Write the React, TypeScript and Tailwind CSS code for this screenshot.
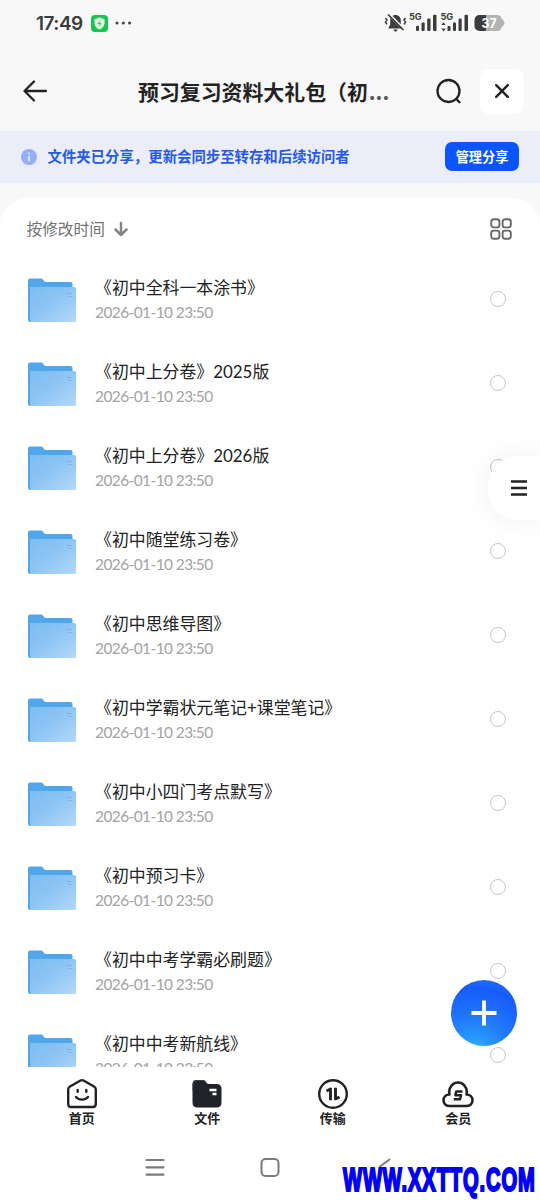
import React from 'react'

const folders = [
  '《初中全科一本涂书》',
  '《初中上分卷》2025版',
  '《初中上分卷》2026版',
  '《初中随堂练习卷》',
  '《初中思维导图》',
  '《初中学霸状元笔记+课堂笔记》',
  '《初中小四门考点默写》',
  '《初中预习卡》',
  '《初中中考学霸必刷题》',
  '《初中中考新航线》',
]

function StatusBar() {
  return (
    <div className="flex h-[46px] items-center pl-9 pr-[34px] text-[#3c3c3c]">
      <span className="mt-0.5 w-[47px] whitespace-nowrap font-[Inter,sans-serif] text-[19px] font-semibold leading-6 tracking-[-0.5px]">17:49</span>
      <svg className="ml-2" width="17" height="17" viewBox="0 0 17 17">
        <rect width="17" height="17" rx="4" fill="#16c653" />
        <path d="M8.5 2.5l5 1.8v4c0 3-2.2 5-5 6.3-2.8-1.3-5-3.3-5-6.3v-4z" fill="#e9fbe6" />
        <path d="M9.6 5L6 9h2.3l-.8 3L11 8H8.8z" fill="#3bcf68" />
      </svg>
      <svg className="ml-[7px]" width="17" height="4" viewBox="0 0 17 4" fill="#4a4a4a">
        <circle cx="2" cy="2" r="1.6" />
        <circle cx="8.3" cy="2" r="1.6" />
        <circle cx="14.6" cy="2" r="1.6" />
      </svg>
      <svg className="ml-auto" width="122" height="24" viewBox="0 0 122 24" fill="#3c3c3c">
        {/* muted bell */}
        <path d="M11.5 4c-3.300 0-5.300 2.400-5.300 5.500v4L4.500 16.700V17.500h14v-.8L16.800 13.500v-4c0-3.100-2-5.500-5.300-5.500z" />
        <path d="M9.500 18.500h4c-.3 1.500-1 2-2 2s-1.700-.5-2-2z" />
        <path d="M4 2.500l16 16" stroke="#f8f8f8" strokeWidth="3" />
        <path d="M4 3.500l15.500 15.500" stroke="#3c3c3c" strokeWidth="1.700" />
        <path d="M1.500 7l1.500 2-1.500 2.200 1.500 2.200M21.500 7L20 9l1.500 2.200-1.500 2.200" fill="none" stroke="#3c3c3c" strokeWidth="1.500" />
        {/* first sim */}
        <text x="25" y="8.800" fontSize="9.200" fontWeight="700" fontFamily="Inter, sans-serif">5G</text>
        <rect x="32" y="14.800" width="3" height="5.200" rx="1" />
        <rect x="37.500" y="11.500" width="3.200" height="8.500" rx="1" />
        <rect x="43.200" y="7.500" width="3.300" height="12.500" rx="1" />
        <rect x="49" y="3.800" width="3.500" height="16.200" rx="1" />
        {/* second sim */}
        <text x="56.500" y="8.800" fontSize="9.200" fontWeight="700" fontFamily="Inter, sans-serif">5G</text>
        <path d="M57.300 14l2.200-2.800 2.200 2.800zM57.300 17.600l2.200 2.800 2.200-2.800z" />
        <rect x="63.500" y="15" width="3" height="5" rx="1" />
        <rect x="69" y="11.500" width="3" height="8.500" rx="1" />
        <rect x="74.500" y="7.500" width="3.200" height="12.500" rx="1" />
        <rect x="80.500" y="3.800" width="3.500" height="16.200" rx="1" />
        {/* battery */}
        <path d="M95 4h18c3 0 4 1.500 4.500 3.500 1.500 1.500 3 3 3 4.500s-1.500 3-3 4.500c-.5 2-1.500 3.500-4.500 3.500H95z" fill="#b3b3b3" />
        <path d="M102 4h-6.500a5 5 0 0 0-5 5v6a5 5 0 0 0 5 5h6.500z" />
        <text x="97.500" y="16.800" fontSize="13" fontWeight="700" fill="#fff" fontFamily="Inter, sans-serif" textLength="15" lengthAdjust="spacingAndGlyphs">37</text>
      </svg>
    </div>
  )
}

function Header() {
  return (
    <header className="flex h-[85px] items-center pl-[22px] pr-4 pt-[5px]">
      <svg className="w-[27px] shrink-0" height="26" viewBox="0 0 27 26" fill="none" stroke="#222" strokeWidth="2.300" strokeLinecap="round" strokeLinejoin="round">
        <path d="M12 3.500L2.500 13l9.500 9.500M2.500 13H24" />
      </svg>
      <h1 className="ml-[89px] w-[256px] whitespace-nowrap text-[20.900px] font-bold leading-[30px] text-[#222]">
        预习复习资料大礼包（初<span className="ml-px text-[#555]">...</span>
      </h1>
      <svg className="ml-[41px] shrink-0" width="28" height="28" viewBox="0 0 28 28" fill="none" stroke="#222" strokeWidth="2.300" strokeLinecap="round">
        <circle cx="13.500" cy="14" r="11" />
        <path d="M21.500 22.300l3 3" />
      </svg>
      <button className="ml-auto flex h-[45px] w-11 items-center justify-center rounded-[9px] bg-white">
        <svg width="14" height="14" viewBox="0 0 14 14" fill="none" stroke="#222" strokeWidth="2.400" strokeLinecap="round">
          <path d="M1.200 1.200l11.600 11.600M12.800 1.200L1.200 12.800" />
        </svg>
      </button>
    </header>
  )
}

function Banner() {
  return (
    <div className="flex h-[52px] items-center bg-[#ebedf9] px-[21px] pb-px">
      <svg width="16" height="16" viewBox="0 0 16 16">
        <circle cx="8" cy="8" r="8" fill="#94aefa" />
        <rect x="7" y="6.800" width="2" height="5.500" rx=".5" fill="#dce5ff" />
        <circle cx="8" cy="4.500" r="1.100" fill="#dce5ff" />
      </svg>
      <span className="ml-[10.500px] whitespace-nowrap pb-px text-[14.400px] font-bold leading-5 text-[#2459ea]">文件夹已分享，更新会同步至转存和后续访问者</span>
      <button className="ml-auto h-[29px] w-[74px] rounded-[7px] bg-[#0b55ff] text-[13.200px] font-bold leading-[27px] text-white">管理分享</button>
    </div>
  )
}

function FolderIcon() {
  return (
    <svg className="mt-1 shrink-0" width="50" height="46" viewBox="0 0 50 46">
      <defs>
        <linearGradient id="front" x1="0" y1="0" x2="1" y2="1">
          <stop offset="0" stopColor="#7dbcf0" />
          <stop offset=".45" stopColor="#8cc4f4" />
          <stop offset="1" stopColor="#b5d8f9" />
        </linearGradient>
      </defs>
      <path d="M1 43.500V2.500q0-2 2-2h12l3 3.500h25.500q2 0 2 2V44H3q-2 0-2-2z" fill="#50a6e9" />
      <path d="M3 9h44.500q1.500 0 1.500 1.500v32q0 1.500-1.500 1.500h-44.500z" fill="url(#front)" />
      <path d="M39.500 15.500h5M41.500 18.500h3" stroke="#71b4ee" strokeWidth="1" />
    </svg>
  )
}

function FolderRow({ name }: { name: string }) {
  return (
    <li className="flex h-[84px] shrink-0 items-center pl-[27px] pr-[34px]">
      <FolderIcon />
      <div className="ml-[18px] flex-1 whitespace-nowrap pt-px">
        <p className="font-[Lato,'Noto_Sans_CJK_SC',sans-serif] text-[16.900px] leading-6 text-[#222]">{name}</p>
        <p className="font-[Lato,sans-serif] text-[15.500px] leading-6 tracking-[-0.600px] text-[#a3a3a3]">2026-01-10 23:50</p>
      </div>
      <span className="size-4 rounded-full border-[1.500px] border-[#c6c6c6]" />
    </li>
  )
}

function TabBar() {
  const label = '-mt-px text-[13px] font-bold leading-[18px] text-[#222]'
  return (
    <nav className="grid h-[73px] grid-cols-4 bg-white px-[19px] pt-[11px]">
      <div className="flex flex-col items-center">
        <svg width="32" height="32" viewBox="0 0 32 32" fill="none" stroke="#222" strokeWidth="2.400" strokeLinecap="round" strokeLinejoin="round">
          <path d="M14.500 2.500q1.500-.8 3 0l10.500 6q1.800 1 1.800 3V26q0 3-3 3H5.200q-3 0-3-3V11.500q0-2 1.800-3z" />
          <path d="M11.700 12v1.800M20.300 12v1.800M10 19c3 3.500 9 3.500 12 0" />
        </svg>
        <span className={label}>首页</span>
      </div>
      <div className="flex flex-col items-center">
        <svg width="32" height="32" viewBox="0 0 32 32">
          <path d="M1.500 6q0-4 4-4h6q2.500 0 3.500 2t3 2h7.500q5 0 5 5v13.500q0 5-5 5H6.500q-5 0-5-5z" fill="#202328" />
          <path d="M2 13V6q0-3.500 4-3.500h5.500q2 0 3 1.500" fill="none" stroke="#3a424a" strokeWidth="1" />
          <path d="M18.500 12h7M21.500 16h4" stroke="#fff" strokeWidth="2.400" />
        </svg>
        <span className={label}>文件</span>
      </div>
      <div className="flex flex-col items-center">
        <svg width="32" height="32" viewBox="0 0 32 32" fill="none" stroke="#222" strokeLinejoin="round">
          <circle cx="16" cy="16" r="13.800" strokeWidth="2.400" />
          <path d="M9.500 13l4-2v11.200M18.500 9.800v11.200l4-2" strokeWidth="2.900" />
        </svg>
        <span className={label}>传输</span>
      </div>
      <div className="flex flex-col items-center">
        <svg width="32" height="32" viewBox="0 0 32 32" fill="none" stroke="#222" strokeLinejoin="round">
          <path d="M8 28c-4 0-6.500-2.300-6.500-5.700 0-3.300 2.500-5.800 6-5.800-.2-.8-.3-1.700-.3-2.700C7.200 9 11 4.500 16 4.500s8.800 4.500 8.800 9.300c0 1-.1 1.900-.3 2.700 3.500 0 6 2.500 6 5.800 0 3.400-2.500 5.700-6.500 5.700z" strokeWidth="2.600" />
          <path d="M20.500 13.500h-6.300l-.8 3.700h5.600l-.9 4.100h-6.300" strokeWidth="2.500" />
        </svg>
        <span className={label}>会员</span>
      </div>
    </nav>
  )
}

function SystemNav() {
  return (
    <div className="relative flex h-[60px] items-start bg-white pl-[145px] pt-[17px]">
      <svg width="20" height="20" viewBox="0 0 20 20" stroke="#7b7b7b" strokeWidth="2.200" strokeLinecap="round">
        <path d="M1.500 3h17M1.500 10.300h17M1.500 17.600h17" />
      </svg>
      <svg className="ml-[95px]" width="20" height="20" viewBox="0 0 20 20" fill="none" stroke="#7b7b7b" strokeWidth="2">
        <rect x="1.500" y="2" width="17" height="17" rx="4" />
      </svg>
      <svg className="ml-[97px]" width="16" height="20" viewBox="0 0 16 20" fill="none" stroke="#7b7b7b" strokeWidth="2" strokeLinecap="round">
        <path d="M12.500 2.500L3 9.500v3" />
      </svg>
      {/* site mark over the corner */}
      <span className="absolute left-[343px] top-[20px] origin-left scale-x-[0.610] whitespace-nowrap font-['Liberation_Sans',sans-serif] text-[33px] font-bold leading-10 tracking-[1.450px] text-[#0000f5] [-webkit-text-stroke:2.200px_#0000f5]">
        WWW.XXTTQ.COM
      </span>
    </div>
  )
}

export default function App() {
  return (
    <div className="relative flex h-[1200px] w-[540px] flex-col overflow-hidden bg-[#f8f8f8] font-['Noto_Sans_CJK_SC',sans-serif]">
      <StatusBar />
      <Header />
      <Banner />
      <main className="mt-[15px] flex h-[869px] flex-col overflow-hidden rounded-t-[28px] bg-white">
        <div className="flex h-[59px] shrink-0 items-center pl-[26.500px] pr-[28px] pt-[3px]">
          <span className="text-[15.700px] leading-6 text-[#737373]">按修改时间</span>
          <svg className="ml-[9px]" width="14" height="16" viewBox="0 0 14 16" fill="none" stroke="#858585" strokeWidth="2.500" strokeLinecap="round" strokeLinejoin="round">
            <path d="M7 2v12M1.500 8.500L7 14l5.500-5.500" />
          </svg>
          <svg className="ml-auto" width="22" height="22" viewBox="0 0 22 22" fill="none" stroke="#686868" strokeWidth="1.900">
            <rect x="1.200" y="1.200" width="8.200" height="8.200" rx="2.500" />
            <rect x="12.600" y="1.200" width="8.200" height="8.200" rx="2.500" />
            <rect x="1.200" y="12.600" width="8.200" height="8.200" rx="2.500" />
            <rect x="12.600" y="12.600" width="8.200" height="8.200" rx="2.500" />
          </svg>
        </div>
        <ul className="flex flex-col">
          {folders.map((name) => (
            <FolderRow key={name} name={name} />
          ))}
        </ul>
      </main>
      <TabBar />
      <SystemNav />

      {/* floating menu handle */}
      <button className="absolute right-0 top-[456px] flex h-16 w-[52px] items-center rounded-l-[30px] bg-white pl-[23px] shadow-[0_0_30px_rgba(0,0,0,0.07)]">
        <svg width="16" height="18" viewBox="0 0 16 18" stroke="#222" strokeWidth="2.600">
          <path d="M0 2.500h16M0 9h16M0 15.500h16" />
        </svg>
      </button>

      {/* add button */}
      <button className="absolute left-[451px] top-[980px] flex size-[66px] items-center justify-center rounded-full bg-[radial-gradient(circle_at_35%_115%,#35c8ff_0%,#2596fb_22%,#2073fa_50%,#165cfb_78%,#2a7dfa_100%)]">
        <svg width="26" height="26" viewBox="0 0 26 26" stroke="#fff" strokeWidth="3.800">
          <path d="M13 .5v25M.5 13h25" />
        </svg>
      </button>
    </div>
  )
}
